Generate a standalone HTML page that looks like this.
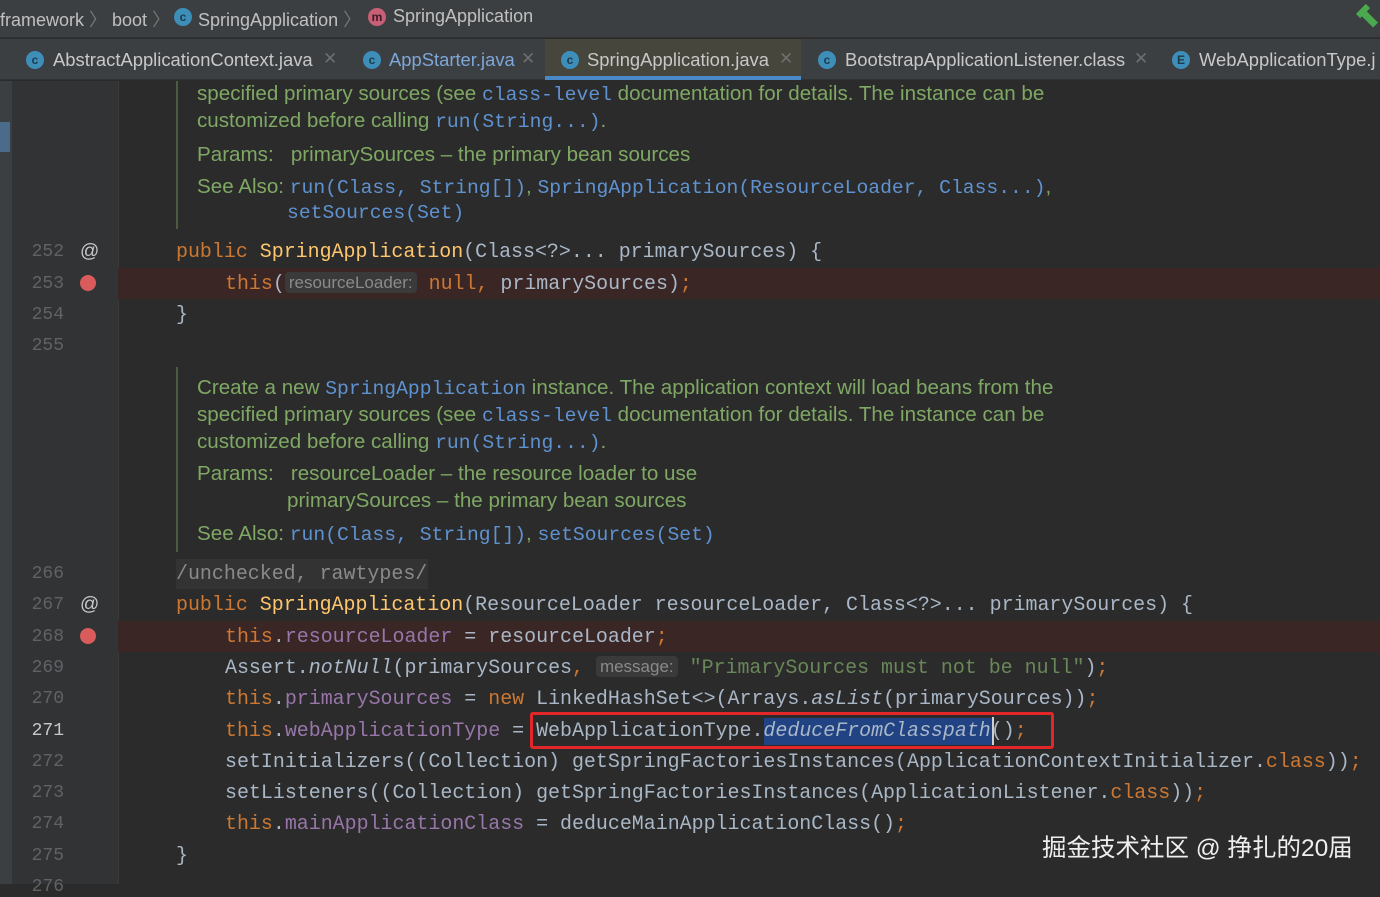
<!DOCTYPE html>
<html><head><meta charset="utf-8"><style>
*{margin:0;padding:0;box-sizing:border-box}
body{width:1380px;height:884px;overflow:hidden;background:#2b2b2b;position:relative;font-family:"Liberation Sans",sans-serif}
.a{position:absolute;white-space:pre}
.mono{font-family:"Liberation Mono",monospace;font-size:19.95px;color:#a9b7c6}
.doc{font-family:"Liberation Sans",sans-serif;font-size:20.6px;color:#7fa864}
.dl{font-family:"Liberation Mono",monospace;font-size:19.7px;color:#5f92d0}
.k{color:#cc7832}.m{color:#ffc66d}.f{color:#9876aa}.s{color:#6a8759}.i{font-style:italic}
.hint{font-family:"Liberation Sans",sans-serif;font-size:17px;color:#8a8a8a;background:#3a3a3a;border-radius:4px;padding:1px 4px;vertical-align:1px}
.ln{position:absolute;left:20px;width:44px;text-align:right;font-family:"Liberation Mono",monospace;font-size:18px;color:#606366}
.ic{position:absolute;width:18px;height:18px;border-radius:50%;background:#3d8eb9;color:#1e3a4a;font-size:12px;font-weight:bold;text-align:center;line-height:18px}
.tab{position:absolute;top:49px;font-size:18.4px;color:#c8c8c8}
.x{position:absolute;top:49px;font-size:17px;color:#6e6e6e}
</style></head><body>
<div class="a" style="left:0;top:0;width:1380px;height:38px;background:#3c3f41;border-bottom:1px solid #323232"></div>
<div class="a" style="left:0;top:6px;font-size:18px;color:#c0c0c0">framework <span style="color:#777">〉</span> boot <span style="color:#777">〉</span></div>
<div class="ic" style="left:174px;top:8px">c</div>
<div class="a" style="left:198px;top:6px;font-size:18px;color:#c0c0c0">SpringApplication <span style="color:#777">〉</span></div>
<div class="ic" style="left:368px;top:8px;background:#c75f77;color:#3a1a22">m</div>
<div class="a" style="left:393px;top:6px;font-size:18px;color:#c0c0c0">SpringApplication</div>
<div class="a" style="left:1365px;top:8px;width:7px;height:20px;background:#4aa84e;transform:rotate(-45deg)"></div>
<div class="a" style="left:1356px;top:8px;width:14px;height:6px;background:#4aa84e;transform:rotate(-45deg)"></div>
<div class="a" style="left:0;top:39px;width:1380px;height:41px;background:#3c3f41;border-bottom:1px solid #323232"></div>
<div class="a" style="left:545px;top:39px;width:256px;height:41px;background:#46463c"></div>
<div class="a" style="left:545px;top:76px;width:256px;height:4px;background:#4a88c7"></div>
<div class="ic" style="left:26px;top:51px">c</div><div class="tab" style="left:53px">AbstractApplicationContext.java</div><div class="x" style="left:323px">✕</div>
<div class="ic" style="left:363px;top:51px">c</div><div class="tab" style="left:389px;color:#7ea7d8">AppStarter.java</div><div class="x" style="left:521px">✕</div>
<div class="ic" style="left:561px;top:51px">c</div><div class="tab" style="left:587px">SpringApplication.java</div><div class="x" style="left:779px">✕</div>
<div class="ic" style="left:818px;top:51px">c</div><div class="tab" style="left:845px">BootstrapApplicationListener.class</div><div class="x" style="left:1134px">✕</div>
<div class="ic" style="left:1172px;top:51px">E</div><div class="tab" style="left:1199px">WebApplicationType.j</div>
<div class="a" style="left:0;top:81px;width:12px;height:803px;background:#3c3f41"></div>
<div class="a" style="left:0;top:122px;width:10px;height:30px;background:#4b6b8a"></div>
<div class="a" style="left:12px;top:81px;width:106px;height:803px;background:#313335"></div>
<div class="a" style="left:118px;top:81px;width:1px;height:803px;background:#3a3a3a"></div>
<div class="a" style="left:118px;top:268px;width:1262px;height:31px;background:#3b2626"></div>
<div class="a" style="left:118px;top:621px;width:1262px;height:31px;background:#3b2626"></div>
<div class="a" style="left:80px;top:275px;width:16px;height:16px;border-radius:50%;background:#d95b5b"></div>
<div class="a" style="left:80px;top:628px;width:16px;height:16px;border-radius:50%;background:#d95b5b"></div>
<div class="a" style="left:80px;top:241px;font-size:19px;color:#c8c8c8">@</div>
<div class="a" style="left:80px;top:594px;font-size:19px;color:#c8c8c8">@</div>
<div class="a" style="left:176px;top:81px;width:2px;height:148px;background:#4b5a40"></div>
<div class="a" style="left:176px;top:367px;width:2px;height:185px;background:#4b5a40"></div>
<div class="ln" style="top:242px">252</div><div class="ln" style="top:274px">253</div><div class="ln" style="top:305px">254</div><div class="ln" style="top:336px">255</div>
<div class="ln" style="top:564px">266</div><div class="ln" style="top:595px">267</div><div class="ln" style="top:627px">268</div><div class="ln" style="top:658px">269</div><div class="ln" style="top:689px">270</div><div class="ln" style="top:721px;color:#c8c8c8">271</div><div class="ln" style="top:752px">272</div><div class="ln" style="top:783px">273</div><div class="ln" style="top:814px">274</div><div class="ln" style="top:846px">275</div><div class="ln" style="top:877px">276</div>
<div class="a doc" style="left:197px;top:82px">specified primary sources (see <span class="dl">class-level</span> documentation for details. The instance can be</div>
<div class="a doc" style="left:197px;top:109px">customized before calling <span class="dl">run(String...)</span>.</div>
<div class="a doc" style="left:197px;top:143px">Params:   primarySources – the primary bean sources</div>
<div class="a doc" style="left:197px;top:175px">See Also: <span class="dl">run(Class, String[])</span>, <span class="dl">SpringApplication(ResourceLoader, Class...)</span>,</div>
<div class="a doc" style="left:287px;top:200px"><span class="dl">setSources(Set)</span></div>
<div class="a mono" style="left:176px;top:240px"><span class="k">public </span><span class="m">SpringApplication</span>(Class&lt;?&gt;... primarySources) {</div>
<div class="a mono" style="left:225px;top:272px"><span class="k">this</span>(<span class="hint">resourceLoader:</span> <span class="k">null, </span>primarySources)<span class="k">;</span></div>
<div class="a mono" style="left:176px;top:303px">}</div>
<div class="a doc" style="left:197px;top:376px">Create a new <span class="dl">SpringApplication</span> instance. The application context will load beans from the</div>
<div class="a doc" style="left:197px;top:403px">specified primary sources (see <span class="dl">class-level</span> documentation for details. The instance can be</div>
<div class="a doc" style="left:197px;top:430px">customized before calling <span class="dl">run(String...)</span>.</div>
<div class="a doc" style="left:197px;top:462px">Params:   resourceLoader – the resource loader to use</div>
<div class="a doc" style="left:287px;top:489px">primarySources – the primary bean sources</div>
<div class="a doc" style="left:197px;top:522px">See Also: <span class="dl">run(Class, String[])</span>, <span class="dl">setSources(Set)</span></div>
<div class="a" style="left:176px;top:559px;width:252px;height:30px;background:#333333"></div>
<div class="a mono" style="left:176px;top:562px;color:#8a8a8a">/unchecked, rawtypes/</div>
<div class="a mono" style="left:176px;top:593px"><span class="k">public </span><span class="m">SpringApplication</span>(ResourceLoader resourceLoader, Class&lt;?&gt;... primarySources) {</div>
<div class="a mono" style="left:225px;top:625px"><span class="k">this</span>.<span class="f">resourceLoader</span> = resourceLoader<span class="k">;</span></div>
<div class="a mono" style="left:225px;top:656px">Assert.<span class="i">notNull</span>(primarySources<span class="k">,</span> <span class="hint">message:</span> <span class="s">"PrimarySources must not be null"</span>)<span class="k">;</span></div>
<div class="a mono" style="left:225px;top:687px"><span class="k">this</span>.<span class="f">primarySources</span> = <span class="k">new </span>LinkedHashSet&lt;&gt;(Arrays.<span class="i">asList</span>(primarySources))<span class="k">;</span></div>
<div class="a" style="left:764px;top:718px;width:228px;height:27px;background:#214283"></div>
<div class="a mono" style="left:225px;top:719px"><span class="k">this</span>.<span class="f">webApplicationType</span> = WebApplicationType.<span class="i">deduceFromClasspath</span>()<span class="k">;</span></div>
<div class="a" style="left:992px;top:717px;width:2px;height:28px;background:#d0d0d0"></div>
<div class="a" style="left:530px;top:712px;width:524px;height:37px;border:3px solid #e3262a;border-radius:3px"></div>
<div class="a mono" style="left:225px;top:750px">setInitializers((Collection) getSpringFactoriesInstances(ApplicationContextInitializer.<span class="k">class</span>))<span class="k">;</span></div>
<div class="a mono" style="left:225px;top:781px">setListeners((Collection) getSpringFactoriesInstances(ApplicationListener.<span class="k">class</span>))<span class="k">;</span></div>
<div class="a mono" style="left:225px;top:812px"><span class="k">this</span>.<span class="f">mainApplicationClass</span> = deduceMainApplicationClass()<span class="k">;</span></div>
<div class="a mono" style="left:176px;top:844px">}</div>
<div class="a" style="left:1042px;top:829px;font-family:'Liberation Sans','Noto Sans CJK SC',sans-serif;font-size:24.5px;color:#eeeeee">掘金技术社区 @ 挣扎的20届</div>
</body></html>
